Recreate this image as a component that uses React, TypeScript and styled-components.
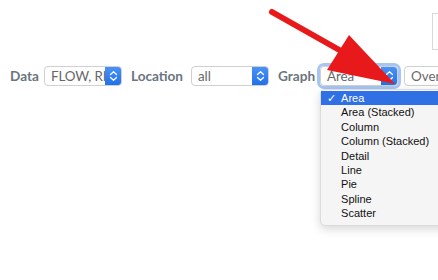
import styled, { createGlobalStyle } from "styled-components";

const GlobalStyle = createGlobalStyle`
  html, body {
    margin: 0;
    padding: 0;
    background: #ffffff;
  }
  body {
    overflow: hidden;
  }
`;

const Page = styled.div`
  position: relative;
  width: 438px;
  height: 280px;
  overflow: hidden;
  background: #ffffff;
  font-family: Lato, "Open Sans", sans-serif;
`;

const TopBar = styled.div`
  height: 50px;
  padding-top: 13px;
  box-sizing: border-box;
  display: flex;
`;

const Panel = styled.div`
  margin-left: 432px;
  flex: 0 0 40px;
  height: 37px;
  border: 1px solid #d9d9d9;
  box-sizing: border-box;
`;

const Toolbar = styled.div`
  display: flex;
  align-items: center;
  width: max-content;
  margin-top: 16px;
  padding-left: 10px;
`;

const Label = styled.span<{ $gap: number }>`
  font-weight: 700;
  font-size: 13.6px;
  color: #6b7580;
  margin-right: ${(p) => p.$gap}px;
`;

const SelectWrap = styled.div<{ $focus?: boolean; $gap: number }>`
  position: relative;
  width: 78px;
  height: 20px;
  margin-right: ${(p) => p.$gap}px;
  border-radius: 4px;
  box-shadow: ${(p) =>
    p.$focus ? "0 0 0 3px rgba(92, 150, 232, 0.55)" : "none"};
`;

const SelectBox = styled.div`
  display: flex;
  height: 100%;
  border: 1px solid #d0d0d0;
  border-radius: 4px;
  background: #ffffff;
  box-sizing: border-box;
  overflow: hidden;
`;

const SelectText = styled.span`
  flex: 1;
  padding-left: 6px;
  font-size: 13.4px;
  letter-spacing: -0.1px;
  line-height: 18px;
  color: #686868;
  white-space: nowrap;
  overflow: hidden;
`;

const Stepper = styled.span`
  flex: 0 0 17px;
  display: flex;
  align-items: center;
  justify-content: center;
  margin: -1px -1px -1px 0;
  background: linear-gradient(#4a94f8, #1f6fe8);
  border-radius: 0 4px 4px 0;
`;

const Button = styled.div`
  height: 20px;
  width: 90px;
  padding-left: 6px;
  border: 1px solid #d0d0d0;
  border-radius: 4px;
  box-sizing: border-box;
  font-size: 13.4px;
  line-height: 18px;
  color: #6a6a6a;
`;

const Menu = styled.div`
  position: absolute;
  top: 23px;
  left: 0;
  width: 130px;
  padding: 1px 0 4px;
  background: #f5f5f5;
  border: 1px solid #dcdcdc;
  border-radius: 5px;
  box-shadow: 0 3px 10px rgba(0, 0, 0, 0.16);
  font-family: "Liberation Sans", Arial, sans-serif;
  font-size: 11px;
  z-index: 2;
`;

const MenuItem = styled.div<{ $active?: boolean }>`
  position: relative;
  height: 14.4px;
  line-height: 14.4px;
  padding-left: 20px;
  color: ${(p) => (p.$active ? "#ffffff" : "#111111")};
  background: ${(p) => (p.$active ? "#2f70e4" : "transparent")};
`;

const Check = styled.span`
  position: absolute;
  left: 6px;
  top: 0;
`;

const Arrow = styled.svg`
  position: absolute;
  left: 0;
  top: 0;
  pointer-events: none;
  z-index: 3;
`;

const Chevrons = () => (
  <svg width="9" height="12" viewBox="0 0 9 12">
    <path
      d="M1.5 4.5 L4.5 1.8 L7.5 4.5 M1.5 7.5 L4.5 10.2 L7.5 7.5"
      fill="none"
      stroke="#ffffff"
      strokeWidth="1.3"
      strokeLinecap="round"
      strokeLinejoin="round"
    />
  </svg>
);

const Select = ({
  value,
  gap,
  focus,
  children,
}: {
  value: string;
  gap: number;
  focus?: boolean;
  children?: React.ReactNode;
}) => (
  <SelectWrap $focus={focus} $gap={gap}>
    <SelectBox>
      <SelectText>{value}</SelectText>
      <Stepper>
        <Chevrons />
      </Stepper>
    </SelectBox>
    {children}
  </SelectWrap>
);

const graphs = [
  "Area",
  "Area (Stacked)",
  "Column",
  "Column (Stacked)",
  "Detail",
  "Line",
  "Pie",
  "Spline",
  "Scatter",
];

export default function App() {
  return (
    <Page>
      <GlobalStyle />
      <TopBar>
        <Panel />
      </TopBar>
      <Toolbar>
        <Label $gap={5}>Data</Label>
        <Select value="FLOW, RI" gap={9} />
        <Label $gap={8}>Location</Label>
        <Select value="all" gap={9} />
        <Label $gap={5}>Graph</Label>
        <Select value="Area" gap={6} focus>
          <Menu>
            {graphs.map((g, i) => (
              <MenuItem key={g} $active={i === 0}>
                {i === 0 && <Check>✓</Check>}
                {g}
              </MenuItem>
            ))}
          </Menu>
        </Select>
        <Button>Overview</Button>
      </Toolbar>
      <Arrow width="438" height="280" viewBox="0 0 438 280">
        <line
          x1="272"
          y1="12"
          x2="350"
          y2="56"
          stroke="#e8191b"
          strokeWidth="6"
          strokeLinecap="round"
        />
        <polygon points="395,84 349,35 327,70" fill="#e8191b" />
      </Arrow>
    </Page>
  );
}
